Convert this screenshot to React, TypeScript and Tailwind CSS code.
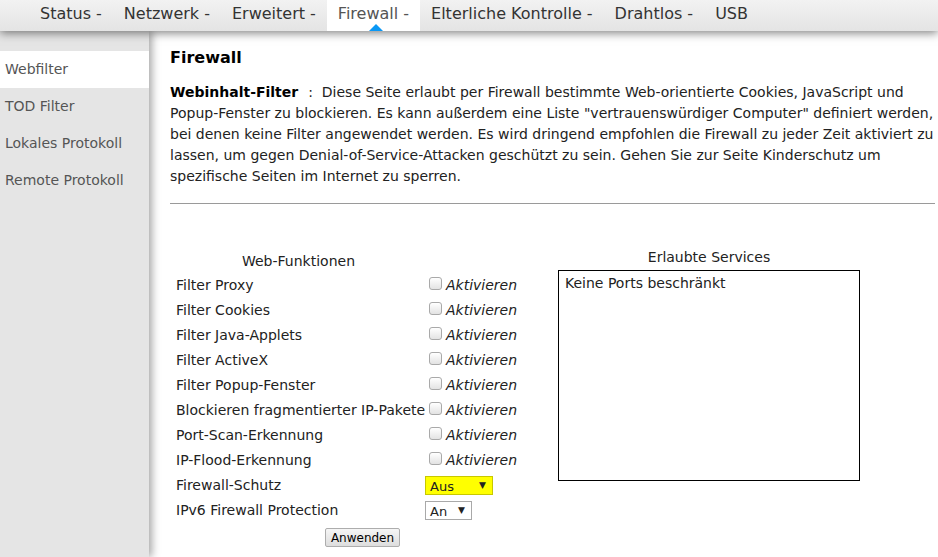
import React from "react";

const tabs = [
  { name: "Status -" },
  { name: "Netzwerk -" },
  { name: "Erweitert -" },
  { name: "Firewall -", active: true },
  { name: "Elterliche Kontrolle -" },
  { name: "Drahtlos -" },
  { name: "USB" },
];

const sideItems = ["Webfilter", "TOD Filter", "Lokales Protokoll", "Remote Protokoll"];

const checkRows = [
  "Filter Proxy",
  "Filter Cookies",
  "Filter Java-Applets",
  "Filter ActiveX",
  "Filter Popup-Fenster",
  "Blockieren fragmentierter IP-Pakete",
  "Port-Scan-Erkennung",
  "IP-Flood-Erkennung",
];

function Checkbox() {
  return (
    <span className="inline-block w-[13px] h-[13px] rounded-[3px] border border-[#a9a9a9] bg-gradient-to-b from-white to-[#e3e3e3] shrink-0" />
  );
}

function Select({ value, width, highlight }: { value: string; width: string; highlight?: boolean }) {
  return (
    <div
      className={`${width} h-[19px] flex items-center justify-between pl-[4px] pr-[6px] border text-[13px] leading-none ${
        highlight ? "bg-[#ffff00] border-[#c8c800]" : "bg-white border-[#a9a9a9]"
      }`}
    >
      <span className="pt-[1px]">{value}</span>
      <span className="text-[9px]">▼</span>
    </div>
  );
}

export default function App() {
  return (
    <div className="h-[557px] w-[938px] flex flex-col overflow-hidden bg-white text-[#222] font-['DejaVu_Sans',Verdana,sans-serif]">
      {/* top menu */}
      <header className="relative z-20 h-[31px] shrink-0 flex pl-[29px] bg-gradient-to-b from-[#f2f2f2] to-[#e4e4e4] shadow-[0_2px_9px_rgba(0,0,0,0.5)]">
        {tabs.map((t) => (
          <div
            key={t.name}
            className={`relative h-full px-[11px] flex items-center text-[16px] ${
              t.active ? "bg-white text-[#555]" : "text-[#333]"
            }`}
          >
            <span className="-mt-[4px]">{t.name}</span>
            {t.active && (
              <span className="absolute bottom-0 left-[42px] w-0 h-0 border-l-[7px] border-r-[7px] border-b-[7px] border-l-transparent border-r-transparent border-b-[#0a98f5]" />
            )}
          </div>
        ))}
      </header>

      <div className="flex flex-1 min-h-0">
        {/* left submenu */}
        <aside className="relative z-10 w-[149px] shrink-0 bg-[#e5e5e5] pt-[20px] shadow-[3px_0_8px_rgba(0,0,0,0.35)]">
          {sideItems.map((s, i) => (
            <div
              key={s}
              className={`h-[37px] flex items-center pl-[5px] text-[14px] text-[#555] ${i === 0 ? "bg-white" : ""}`}
            >
              {s}
            </div>
          ))}
        </aside>

        {/* page content */}
        <main className="flex-1 pl-[21px] pr-[3px]">
          <h1 className="mt-[17px] text-[16px] font-bold text-black leading-[20px]">Firewall</h1>
          <p className="mt-[14px] text-[14px] leading-[21px]">
            <b className="text-black mr-[10px]">Webinhalt-Filter</b>
            :&nbsp;&nbsp;Diese Seite erlaubt per Firewall bestimmte Web-orientierte Cookies, JavaScript und
            Popup-Fenster zu blockieren. Es kann außerdem eine Liste "vertrauenswürdiger Computer" definiert werden,
            bei denen keine Filter angewendet werden. Es wird dringend empfohlen die Firewall zu jeder Zeit aktiviert zu
            lassen, um gegen Denial-of-Service-Attacken geschützt zu sein. Gehen Sie zur Seite Kinderschutz um
            spezifische Seiten im Internet zu sperren.
          </p>
          <hr className="mt-[16px] border-t border-[#9a9a9a]" />

          <div className="mt-[45px] flex pl-[6px]">
            {/* web functions */}
            <div className="w-[340px] flex flex-col text-[14px]">
              <div className="w-[245px] text-center h-[23px] leading-[22px] mt-[1px]">Web-Funktionen</div>
              {checkRows.map((r) => (
                <div key={r} className="h-[25px] flex items-center">
                  <span className="w-[253px] shrink-0 whitespace-nowrap">{r}</span>
                  <span className="flex items-center gap-[4px]">
                    <span className="-mt-[4px] flex">
                      <Checkbox />
                    </span>
                    <i>Aktivieren</i>
                  </span>
                </div>
              ))}
              <div className="h-[25px] flex items-center">
                <span className="w-[249px] shrink-0">Firewall-Schutz</span>
                <Select value="Aus" width="w-[68px]" highlight />
              </div>
              <div className="h-[25px] flex items-center">
                <span className="w-[249px] shrink-0">IPv6 Firewall Protection</span>
                <Select value="An" width="w-[47px]" />
              </div>
              <div className="flex pl-[149px] mt-[5px]">
                <button className="w-[75px] h-[19px] border border-[#adadad] rounded-[2px] bg-gradient-to-b from-[#f6f6f6] to-[#dddddd] text-[12px] leading-none text-black">
                  Anwenden
                </button>
              </div>
            </div>

            {/* allowed services */}
            <div className="ml-[42px] w-[302px] flex flex-col text-[14px]">
              <div className="text-center h-[20px] leading-[20px] -mt-[2px]">Erlaubte Services</div>
              <div className="mt-[3px] h-[211px] border border-black px-[6px] pt-[2px] leading-[20px]">
                Keine Ports beschränkt
              </div>
            </div>
          </div>
        </main>
      </div>
    </div>
  );
}
